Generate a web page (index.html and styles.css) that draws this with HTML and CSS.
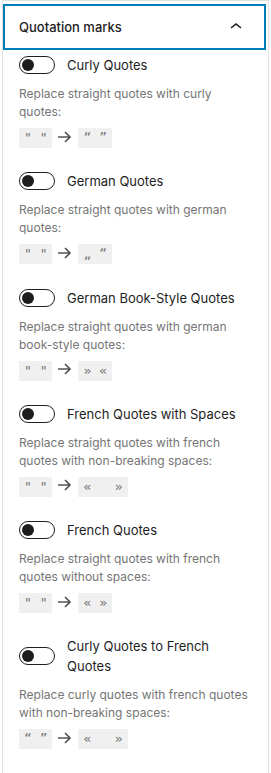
FILE: index.html
```html
<!DOCTYPE html>
<html lang="en">
<head>
    <meta charset="UTF-8">
    <meta name="viewport" content="width=device-width, initial-scale=1.0">
    <title>Quotation marks</title>
    <link rel="stylesheet" href="styles.css">
</head>
<body>

    <div class="panel">
        <button class="panel-toggle">
            <span>Quotation marks</span>
            <svg class="chevron" width="24" height="24" viewBox="0 0 24 24"><path d="M6.5 12.4 12 8l5.5 4.4-.9 1.2L12 10l-4.6 3.6z"/></svg>
        </button>

        <div class="panel-body">
            <div class="option">
                <label class="toggle-row"><span class="toggle"><span class="thumb"></span></span><span class="label">Curly Quotes</span></label>
                <p class="help">Replace straight quotes with curly quotes:</p>
                <div class="example">
                    <code>" "</code>
                    <svg class="arrow" width="18" height="18" viewBox="0 0 18 18"><path d="M3 9h12M10 4l5 5-5 5"/></svg>
                    <code>“ ”</code>
                </div>
            </div>

            <div class="option">
                <label class="toggle-row"><span class="toggle"><span class="thumb"></span></span><span class="label">German Quotes</span></label>
                <p class="help">Replace straight quotes with german quotes:</p>
                <div class="example">
                    <code>" "</code>
                    <svg class="arrow" width="18" height="18" viewBox="0 0 18 18"><path d="M3 9h12M10 4l5 5-5 5"/></svg>
                    <code>„ “</code>
                </div>
            </div>

            <div class="option">
                <label class="toggle-row"><span class="toggle"><span class="thumb"></span></span><span class="label">German Book-Style Quotes</span></label>
                <p class="help">Replace straight quotes with german book-style quotes:</p>
                <div class="example">
                    <code>" "</code>
                    <svg class="arrow" width="18" height="18" viewBox="0 0 18 18"><path d="M3 9h12M10 4l5 5-5 5"/></svg>
                    <code>» «</code>
                </div>
            </div>

            <div class="option">
                <label class="toggle-row"><span class="toggle"><span class="thumb"></span></span><span class="label">French Quotes with Spaces</span></label>
                <p class="help">Replace straight quotes with french quotes with non-breaking spaces:</p>
                <div class="example">
                    <code>" "</code>
                    <svg class="arrow" width="18" height="18" viewBox="0 0 18 18"><path d="M3 9h12M10 4l5 5-5 5"/></svg>
                    <code>«&nbsp;&nbsp;&nbsp;»</code>
                </div>
            </div>

            <div class="option">
                <label class="toggle-row"><span class="toggle"><span class="thumb"></span></span><span class="label">French Quotes</span></label>
                <p class="help">Replace straight quotes with french quotes without spaces:</p>
                <div class="example">
                    <code>" "</code>
                    <svg class="arrow" width="18" height="18" viewBox="0 0 18 18"><path d="M3 9h12M10 4l5 5-5 5"/></svg>
                    <code>« »</code>
                </div>
            </div>

            <div class="option">
                <label class="toggle-row"><span class="toggle"><span class="thumb"></span></span><span class="label">Curly Quotes to French Quotes</span></label>
                <p class="help">Replace curly quotes with french quotes with non-breaking spaces:</p>
                <div class="example">
                    <code>“ ”</code>
                    <svg class="arrow" width="18" height="18" viewBox="0 0 18 18"><path d="M3 9h12M10 4l5 5-5 5"/></svg>
                    <code>«&nbsp;&nbsp;&nbsp;»</code>
                </div>
            </div>
        </div>
    </div>

</body>
</html>
```

FILE: styles.css
```css
html, body {
    height: 100%;
}
body {
    margin: 0;
    font-family: Inter, "Noto Sans", sans-serif;
    font-size: 13px;
    color: #1e1e1e;
    background: #fff;
}
.panel {
    box-sizing: border-box;
    min-height: 100%;
    margin-left: 2px;
    width: 267px;
    border-top: 1px solid #e0e0e0;
    border-left: 1px solid #e0e0e0;
    border-right: 1px solid #e0e0e0;
}
.panel-toggle {
    display: flex;
    align-items: center;
    justify-content: space-between;
    box-sizing: border-box;
    width: 263px;
    height: 46px;
    margin-top: 3px;
    padding: 0 18px 0 16px;
    border: none;
    background: #fff;
    box-shadow: inset 0 0 0 2px #007cba;
    font-family: inherit;
    font-size: 13px;
    font-weight: 500;
    color: #1e1e1e;
    text-align: left;
}
.chevron {
    fill: #1e1e1e;
}
.panel-body {
    padding: 5px 16px 0 16px;
}
.option {
    margin-bottom: 23.3px;
}
.toggle-row {
    display: flex;
    align-items: center;
}
.toggle {
    position: relative;
    flex: none;
    box-sizing: border-box;
    width: 36px;
    height: 18px;
    margin-right: 12px;
    border: 1px solid #1e1e1e;
    border-radius: 9px;
}
.thumb {
    position: absolute;
    top: 2px;
    left: 2px;
    width: 12px;
    height: 12px;
    border-radius: 50%;
    background: #1e1e1e;
}
.label {
    line-height: 20px;
}
.help {
    margin: 10px 0 0 0;
    font-size: 12px;
    line-height: 18px;
    color: #757575;
}
.example {
    display: flex;
    align-items: center;
    margin-top: 7px;
    color: #757575;
}
code {
    display: block;
    padding: 0 5px;
    line-height: 20px;
    background: #f0f0f0;
    font-family: "DejaVu Sans Mono", monospace;
    font-size: 13px;
    white-space: pre;
}
.arrow {
    margin: -3px 5px 0 3px;
    fill: none;
    stroke: #555;
    stroke-width: 1.7;
}
```
